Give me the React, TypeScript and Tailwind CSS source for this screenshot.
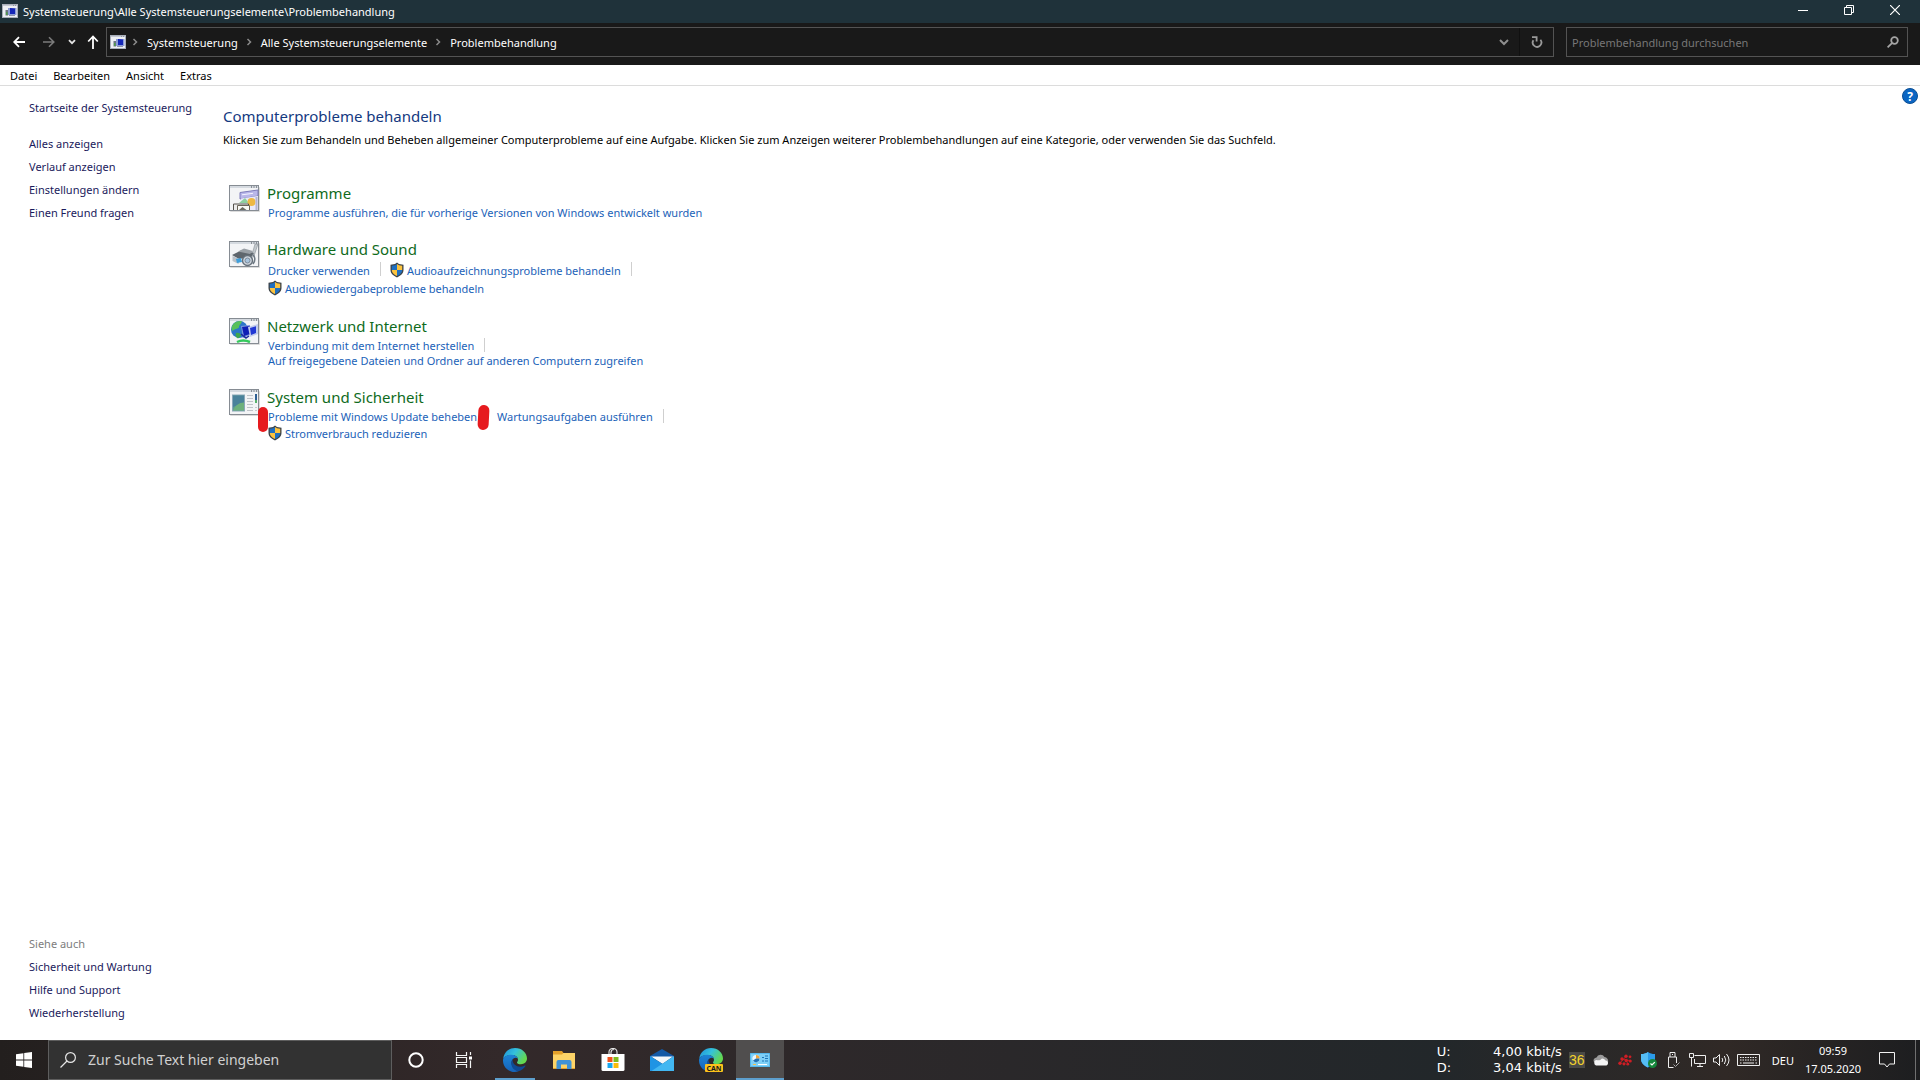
import React from "react";

function WindowIcon({ className }: { className: string }) {
  return (
    <svg viewBox="0 0 16 14" className={className} aria-hidden="true">
      <rect width="16" height="14" fill="#eef0f4" />
      <rect width="16" height="2" fill="#c3c8d2" />
      <path d="M11 1h1M13 1h1" stroke="#5b6270" />
      <rect x="0.5" y="0.5" width="15" height="13" fill="none" stroke="#a9afba" />
      <rect x="6" y="4" width="8.500" height="7" fill="#8b9cd6" />
      <path d="m8 4 5 .5V10H8z" fill="#1426b8" />
      <rect x="3.5" y="6" width="2.500" height="5.500" fill="#6d7682" />
      <rect x="4" y="8" width="1.500" height="3" fill="#4f9a4c" />
      <path d="M7 11.500h6" stroke="#8d93b0" />
    </svg>
  );
}

function Shield() {
  return (
    <svg viewBox="0 0 14 16" className="h-4 w-3.5 shrink-0" aria-hidden="true">
      <path d="M7 .5 9 2l4.500.8v5.200c0 3.500-3 5.800-6.500 7.500C3.500 13.800.5 11.500.5 8V2.800L5 2z" fill="#3d4348" />
      <path d="M7 2v6H1.800V3.800L5 3.200z" fill="#1f6fc0" />
      <path d="M7 2v6h5.200V3.800L9 3.200z" fill="#fcc33d" />
      <path d="M7 8v6C4 12.600 1.800 11 1.800 8z" fill="#fcc33d" />
      <path d="M7 8v6c3-1.400 5.200-3 5.200-6z" fill="#1f6fc0" />
    </svg>
  );
}

function Frame({ children }: { children: React.ReactNode }) {
  return (
    <svg viewBox="0 0 32 28" className="mt-0.5 h-7 w-8 shrink-0" aria-hidden="true">
      <rect x="1" y="2" width="30" height="25" rx="1" fill="#dcdcdc" />
      <rect x="0.5" y="0.5" width="29" height="25" fill="#f3f4f6" stroke="#868c93" />
      <rect x="1" y="1" width="28" height="2" fill="#d5dae0" />
      <path d="M22 2h1M24.500 2h1M27 2h1" stroke="#40464e" />
      {children}
    </svg>
  );
}

function ProgramsArt() {
  return (
    <Frame>
      <path d="M11 7.500 29 5v6l-18 3z" fill="#b9b7ea" stroke="#7f7dbb" />
      <path d="m13 9.800 11-1.500" stroke="#f4f3ff" />
      <path d="M12 13.500 29 11v14H12z" fill="#e9e9fa" />
      <path d="m10 18 6-5 4 5z" fill="#8ccf9e" />
      <circle cx="22.500" cy="17" r="4" fill="#eeb844" />
      <path d="M4.500 25v-6h15v6" fill="#ececec" stroke="#55524c" />
      <path d="M8.500 25v-4.500h12V25" fill="#f8f8f4" stroke="#6a6458" />
      <path d="m10 25 3.500-3 4 3z" fill="#6b6b62" />
      <path d="M27.500 12v13" stroke="#b4b4d4" strokeWidth="2" />
    </Frame>
  );
}

function HardwareArt() {
  return (
    <Frame>
      <path d="M26 3h3l-4 12-3 2z" fill="#c3c8cd" stroke="#888e94" strokeWidth=".6" />
      <path d="m3 14 10-5 12 3-3 4-12 2z" fill="#5f666d" />
      <path d="m9 10.500 6-3 9 2.500-3 3z" fill="#9aa0a6" />
      <path d="m3.500 15 7 3-1 5-6-3z" fill="#b9c0c7" />
      <path d="m7 18 5-1 1 4-5 1z" fill="#3f9fdc" />
      <circle cx="18.500" cy="19.500" r="5" fill="#cfd6de" stroke="#66707a" strokeWidth="1.400" />
      <circle cx="18.500" cy="19.500" r="2.500" fill="#a9c4dc" stroke="#7d8a9a" />
      <path d="M23 13c3 2 4 6 1 10" fill="none" stroke="#6e7882" strokeWidth="1.500" />
    </Frame>
  );
}

function NetworkArt() {
  return (
    <Frame>
      <circle cx="10.500" cy="11.500" r="8.500" fill="#2d76c9" />
      <path d="M4 6.500c3-3.500 7-4 9-3-1 3-3 3-3 6-2 2-4 1-6.500 3.500-1.500-2-1-4.500.5-6.500z" fill="#58c05a" />
      <path d="M7 15c3-1 5 1 5 3l-3 2.500c-2-1-3-3.500-2-5.500z" fill="#3ea64e" />
      <path d="m12 8 9-1v10l-7 3z" fill="#7f97dd" />
      <path d="m13 9 8-1v8l-6 2z" fill="#0f1fb5" />
      <path d="m19 9 10-3v10l-8 3z" fill="#c2ccec" />
      <path d="m21 10 6-1.800v6.800L22 17z" fill="#2238d4" />
      <path d="m12 16 5 4 3-2" fill="none" stroke="#1b2a9a" strokeWidth="1.500" />
      <path d="M8 24q6-3 13 0" fill="none" stroke="#35c95c" strokeWidth="2.500" />
    </Frame>
  );
}

function SystemArt() {
  return (
    <Frame>
      <rect x="3.500" y="6" width="12" height="16" fill="#5c9c95" stroke="#8ba7ba" />
      <path d="M4 6.500h11v7L4 18z" fill="#4a829b" />
      <path d="M4 21.500c2-5 6-8 11-8v8z" fill="#6db07c" />
      <path d="M18 6.500h6M18 9.500h6M18 12.500h6M18 15.500h6M18 18.500h6M18 21.500h6" stroke="#bfc3c8" />
      <path d="M27 5v9" stroke="#2e5f93" strokeWidth="2" />
      <path d="M27 11v3" stroke="#58b26c" strokeWidth="2" />
      <path d="M26 18.500h2M26 21.500h2" stroke="#c6c9cd" />
    </Frame>
  );
}

type Task = { text: string; shield?: boolean; divider?: boolean };

function TaskLink({ text, shield, divider }: Task) {
  return (
    <span className="flex items-center">
      <a href="#" className="flex items-center gap-[3px] whitespace-nowrap hover:underline">
        {shield && <Shield />}
        <span>{text}</span>
      </a>
      {divider && <span className="mr-[9px] ml-2.5 mb-0.5 h-3.5 w-px bg-[#cfcfcf]" />}
    </span>
  );
}

function Category({ title, art, rows, children }: { title: string; art: React.ReactNode; rows: Task[][]; children?: React.ReactNode }) {
  return (
    <section className="relative flex gap-1.5">
      {art}
      <div>
        <h2 className="text-[15px] leading-5 text-[#0f6b1c]">
          <a href="#">{title}</a>
        </h2>
        <div className="ml-px pt-0.5">
          {rows.map((row, i) => (
            <div key={i} className={row.some((t) => t.shield) ? "flex h-[18px] items-center" : "flex h-[15px] items-center"}>
              {row.map((t) => (
                <TaskLink key={t.text} {...t} />
              ))}
            </div>
          ))}
        </div>
      </div>
      {children}
    </section>
  );
}

const Crumb = ({ children }: { children: string }) => (
  <>
    <svg viewBox="0 0 6 8" className="h-2 w-1.5" fill="none" stroke="#8a8a8a" strokeWidth="1.500" aria-hidden="true">
      <path d="m1.500 1 3 3-3 3" />
    </svg>
    <button className="mr-2 ml-[9px] whitespace-nowrap">{children}</button>
  </>
);

function EdgeIcon({ can }: { can?: boolean }) {
  const id = can ? "edge-can" : "edge";
  return (
    <svg viewBox="0 0 24 24" className="size-6" aria-hidden="true">
      <defs>
        <linearGradient id={id + "-a"} x1="0" y1="0" x2="1" y2=".5">
          <stop offset="0" stopColor="#1d8fdb" />
          <stop offset=".5" stopColor="#34c1dc" />
          <stop offset="1" stopColor="#64d84f" />
        </linearGradient>
        <linearGradient id={id + "-b"} x1="0" y1="0" x2="0" y2="1">
          <stop offset="0" stopColor="#1c84d6" />
          <stop offset="1" stopColor="#1563b8" />
        </linearGradient>
      </defs>
      <path d="M.3 10.500C1 4.500 6 0 12 0c7 0 12 5 12 10.500 0 3.500-2.800 5.700-6 5.700-2.600 0-4-.8-4-1.800 0-.7 1-1 1-2.700C15 9 12.200 7 8.800 7 4.500 7 1.500 8.500.3 10.500z" fill={`url(#${id}-a)`} />
      <path d="M.3 10.500C1.500 8.200 4.800 6.700 8.300 6.700c3.500 0 6 1.800 6.600 3.800C13.500 9.300 11.800 9.400 10.500 10.500 7 13 8 21 15.500 23.300 8 25.800 0 20.500 0 12.500c0-.7.100-1.400.3-2z" fill={`url(#${id}-b)`} />
      <path d="M9.500 11.500C6.500 15 9 22.500 15.500 23.300c3-.8 5.500-2.800 7-5.300.3-.5-.2-.7-.6-.5C16 20.500 9.700 17.500 9.500 11.500z" fill="#0f4a94" />
      {can && (
        <>
          <rect x="6" y="16" width="18" height="8" rx="1" fill="#fcc21b" />
          <text x="15" y="22.500" textAnchor="middle" fontSize="7" fontWeight="700" fontFamily="'Noto Sans', sans-serif" fill="#1b1b1b">CAN</text>
        </>
      )}
    </svg>
  );
}

function TaskButton({ label, running, active, children }: { label: string; running?: boolean; active?: boolean; children: React.ReactNode }) {
  return (
    <button aria-label={label} className={active ? "relative flex h-10 w-12 items-center justify-center bg-[#504e4e]" : "relative flex h-10 w-12 items-center justify-center"}>
      {children}
      {running && <span className="absolute inset-x-1 bottom-0 h-0.5 bg-[#5d9fcd]" />}
      {active && <span className="absolute inset-x-0 bottom-0 h-0.5 bg-[#5d9fcd]" />}
    </button>
  );
}

const navLinks = ["Alles anzeigen", "Verlauf anzeigen", "Einstellungen ändern", "Einen Freund fragen"];
const seeAlso = ["Sicherheit und Wartung", "Hilfe und Support", "Wiederherstellung"];

export default function App() {
  return (
    <div className="flex min-h-screen flex-col bg-white font-['Noto_Sans',sans-serif] text-[11px] leading-[15px] text-black">
      <header>
        <div className="flex h-[23px] items-center bg-[#1f323a] text-white">
          <WindowIcon className="mb-0.5 ml-0.5 h-3.5 w-4" />
          <h1 className="ml-[5px] flex-1">Systemsteuerung\Alle Systemsteuerungselemente\Problembehandlung</h1>
          <button aria-label="Minimieren" className="flex h-[23px] w-[46px] items-center justify-center">
            <svg viewBox="0 0 10 10" className="mb-1 size-2.5" stroke="#fff"><path d="M0 5.500h10" /></svg>
          </button>
          <button aria-label="Verkleinern" className="flex h-[23px] w-[46px] items-center justify-center">
            <svg viewBox="0 0 10 10" className="mb-1 size-2.5" fill="none" stroke="#fff"><path d="M.5 2.500h7v7h-7zM2.500 2.500v-2h7v7h-2" /></svg>
          </button>
          <button aria-label="Schließen" className="mr-0.5 flex h-[23px] w-[46px] items-center justify-center">
            <svg viewBox="0 0 10 10" className="mb-1 size-2.5" fill="none" stroke="#fff" strokeWidth="1.200"><path d="m0 0 10 10M10 0 0 10" /></svg>
          </button>
        </div>

        <div className="flex h-[42px] items-center bg-[#191919] pr-3 pb-1 text-white">
          <button aria-label="Zurück" className="ml-[13px]">
            <svg viewBox="0 0 12 12" className="size-3" fill="none" stroke="#fff" strokeWidth="1.800"><path d="M12 6H1.500M6 1.200 1.200 6 6 10.800" /></svg>
          </button>
          <button aria-label="Vorwärts" className="ml-[18px]">
            <svg viewBox="0 0 12 12" className="size-3" fill="none" stroke="#7b7b7b" strokeWidth="1.600"><path d="M0 6h10.500M6 1.200 10.800 6 6 10.800" /></svg>
          </button>
          <button aria-label="Zuletzt besucht" className="ml-[13px]">
            <svg viewBox="0 0 8 6" className="h-1.5 w-2" fill="none" stroke="#e4e4e4" strokeWidth="1.800"><path d="m1 1.200 3 3 3-3" /></svg>
          </button>
          <button aria-label="Nach oben" className="ml-[11px]">
            <svg viewBox="0 0 12 14" className="h-3.5 w-3" fill="none" stroke="#fff" strokeWidth="1.800"><path d="M6 14V1.500M1.200 6.500 6 1.500l4.800 5" /></svg>
          </button>
          <nav className="ml-[7px] flex h-[30px] flex-1 items-center border border-[#535353] pl-[3px]">
            <WindowIcon className="mr-1.5 h-3.5 w-4" />
            <Crumb>Systemsteuerung</Crumb>
            <Crumb>Alle Systemsteuerungselemente</Crumb>
            <Crumb>Problembehandlung</Crumb>
            <button aria-label="Vorherige Orte" className="mr-2.5 ml-auto">
              <svg viewBox="0 0 10 7" className="h-[7px] w-2.5" fill="none" stroke="#8f8f8f" strokeWidth="2"><path d="m1 1 4 4 4-4" /></svg>
            </button>
            <button aria-label="Aktualisieren" className="flex h-7 w-[34px] items-center justify-center border-l border-[#101010]">
              <svg viewBox="0 0 12 12" className="size-3" fill="none" stroke="#9a9a9a" strokeWidth="1.800"><path d="M2.400 4.200A4.300 4.300 0 1 0 9.400 3.800M1 1.200H5.600V5.600" /></svg>
            </button>
          </nav>
          <form className="ml-3 flex h-[30px] w-[342px] items-center border border-[#535353] pr-2 pl-[5px]">
            <input aria-label="Problembehandlung durchsuchen" placeholder="Problembehandlung durchsuchen" className="min-w-0 flex-1 bg-transparent outline-none placeholder:text-[#777]" />
            <svg viewBox="0 0 12 12" className="size-3" fill="none" stroke="#a5a5a5" strokeWidth="1.800" aria-hidden="true"><circle cx="7.500" cy="4.500" r="3.300" /><path d="M5.200 6.800.6 11.400" /></svg>
          </form>
        </div>

        <div className="flex h-[21px] items-center gap-4 border-b border-[#dcdcdc] px-2.5 text-black">
          <button>Datei</button>
          <button>Bearbeiten</button>
          <button>Ansicht</button>
          <button>Extras</button>
        </div>
      </header>

      <div className="flex flex-1">
        <aside className="flex w-[223px] flex-col pt-2.5 pb-4 pl-[29px] leading-[23px] text-[#1a1a5c]">
          <a href="#" className="mb-[13px]">Startseite der Systemsteuerung</a>
          {navLinks.map((l) => (
            <a key={l} href="#">{l}</a>
          ))}
          <p className="mt-auto text-[#7d7d7d]">Siehe auch</p>
          {seeAlso.map((l) => (
            <a key={l} href="#">{l}</a>
          ))}
        </aside>

        <main className="min-w-0 flex-1 pt-5">
          <h2 className="text-[15px] leading-5 text-[#14397f]">Computerprobleme behandeln</h2>
          <p className="mt-1.5">
            Klicken Sie zum Behandeln und Beheben allgemeiner Computerprobleme auf eine Aufgabe. Klicken Sie zum Anzeigen weiterer Problembehandlungen auf eine Kategorie, oder verwenden Sie das Suchfeld.
          </p>
          <div className="mt-9 ml-1.5 flex flex-col gap-[19px] text-[#1b62b8]">
            <Category title="Programme" art={<ProgramsArt />} rows={[[{ text: "Programme ausführen, die für vorherige Versionen von Windows entwickelt wurden" }]]} />
            <Category
              title="Hardware und Sound"
              art={<HardwareArt />}
              rows={[
                [{ text: "Drucker verwenden", divider: true }, { text: "Audioaufzeichnungsprobleme behandeln", shield: true, divider: true }],
                [{ text: "Audiowiedergabeprobleme behandeln", shield: true }],
              ]}
            />
            <Category
              title="Netzwerk und Internet"
              art={<NetworkArt />}
              rows={[[{ text: "Verbindung mit dem Internet herstellen", divider: true }], [{ text: "Auf freigegebene Dateien und Ordner auf anderen Computern zugreifen" }]]}
            />
            <Category
              title="System und Sicherheit"
              art={<SystemArt />}
              rows={[
                [{ text: "Probleme mit Windows Update beheben", divider: true }, { text: "Wartungsaufgaben ausführen", divider: true }],
                [{ text: "Stromverbrauch reduzieren", shield: true }],
              ]}
            >
              <span className="absolute top-5 left-[29px] h-[25px] w-2.5 rounded-full bg-[#e61a1e]" />
              <span className="absolute top-[18px] left-[249px] h-[25px] w-[11px] rotate-3 rounded-full bg-[#e61a1e]" />
            </Category>
          </div>
        </main>

        <button aria-label="Hilfe" className="mt-0.5 mr-0.5 flex size-4 items-center justify-center self-start rounded-full border border-[#0b4f94] bg-[#0b66c3] text-[12px] font-bold text-white">?</button>
      </div>

      <footer className="flex h-10 items-center bg-[#1f2225] text-white">
        <div className="flex h-10 min-w-0 flex-1 items-center bg-linear-to-r from-[#231f1e] from-0% via-[#33292a] via-35% to-[#22272a]">
          <button aria-label="Start" className="flex h-10 w-12 items-center justify-center">
            <svg viewBox="0 0 16 16" className="size-4" fill="#fff"><path d="M0 2.200 7.400 1.200v6.400H0zM8.200 1.100 16 0v7.600H8.200zM0 8.400h7.400v6.400L0 13.800zM8.200 8.400H16V16l-7.800-1.100z" /></svg>
          </button>
          <label className="flex h-10 w-[344px] items-center border border-[#5e5e5e] bg-[#323232] pl-[11px]">
            <svg viewBox="0 0 16 16" className="size-4" fill="none" stroke="#e6e6e6" strokeWidth="1.200" aria-hidden="true"><circle cx="10.500" cy="5.500" r="4.900" /><path d="M7 9 .5 15.500" /></svg>
            <input aria-label="Zur Suche Text hier eingeben" placeholder="Zur Suche Text hier eingeben" className="ml-3 min-w-0 flex-1 bg-transparent text-[14px] leading-5 outline-none placeholder:text-[#d0d0d0]" />
          </label>
          <TaskButton label="Cortana">
            <svg viewBox="0 0 16 16" className="size-4" fill="none" stroke="#fff" strokeWidth="2"><circle cx="8" cy="8" r="6.700" /></svg>
          </TaskButton>
          <TaskButton label="Aktive Anwendungen">
            <svg viewBox="0 0 18 16" className="h-4 w-[18px]" fill="none" stroke="#f4f4f4" strokeWidth="1.200"><path d="M1.500 0v3.500h10V0M1.500 16v-3.500h10V16M1.500 5.500h10v5h-10zM15.500 0v3M15.500 8.500V16" /><path d="M14 4.500h3v3h-3z" fill="#fff" stroke="none" /></svg>
          </TaskButton>
          <div className="ml-[3px] flex gap-px">
            <TaskButton label="Microsoft Edge" running><EdgeIcon /></TaskButton>
            <TaskButton label="Explorer">
              <svg viewBox="0 0 22 18" className="h-[18px] w-[22px]">
                <path d="M0 0h9l1.500 2H22v16H0z" fill="#e3a02a" /><path d="M0 3.500h9l1.500-1.500H22v15H0z" fill="#fcd367" />
                <path d="M3.500 18V11q0-2 2-2h11q2 0 2 2v7h-4.500v-4.500H8V18z" fill="#3f92d6" />
              </svg>
            </TaskButton>
            <TaskButton label="Microsoft Store">
              <svg viewBox="0 0 24 24" className="size-6">
                <path d="M8 6V4a4 3.500 0 0 1 8 0v2M10 6V4.500a3 3 0 0 1 3-3" fill="none" stroke="#e8e8e8" strokeWidth="1.100" />
                <path d="M.5 6h23v15.500a1.500 1.500 0 0 1-1.500 1.500H2a1.500 1.500 0 0 1-1.500-1.500z" fill="#fff" />
                <path d="M6.500 9h5v5h-5z" fill="#f1511b" /><path d="M12.500 9h5v5h-5z" fill="#80bb1c" /><path d="M6.500 15h5v5h-5z" fill="#1aa7ee" /><path d="M12.500 15h5v5h-5z" fill="#fbbc0a" />
              </svg>
            </TaskButton>
            <TaskButton label="Mail">
              <svg viewBox="0 0 24 22" className="h-[22px] w-6">
                <path d="M0 7 12 0l12 7v3H0z" fill="#1459a6" /><path d="M1 7.500h22L12.500 15z" fill="#f4f7fa" />
                <path d="M0 7v15h24z" fill="#1f94e4" /><path d="M24 7v15H1.500z" fill="#42b7f2" />
              </svg>
            </TaskButton>
            <TaskButton label="Microsoft Edge Canary"><EdgeIcon can /></TaskButton>
            <TaskButton label="Systemsteuerung" active>
              <svg viewBox="0 0 20 14" className="h-3.5 w-5">
                <rect width="20" height="14" rx=".5" fill="#56b9ee" /><rect x="1" y="1" width="18" height="12" fill="#7fd0f7" />
                <circle cx="6" cy="5.500" r="3.600" fill="#e9f6fd" /><path d="M6 5.500V1.900A3.600 3.600 0 0 1 9.600 5.500z" fill="#f2a43a" /><path d="M6 5.500h3.600A3.600 3.600 0 0 1 3 7.500z" fill="#2273b6" />
                <path d="M12 4.500h2M12 8h2M15 3h3M15 5.500h3M15 8h3" stroke="#1e74b8" /><path d="M3 11.500h3" stroke="#f6c04a" /><path d="M8 11.500h9" stroke="#fff" />
              </svg>
            </TaskButton>
          </div>
        </div>

        <div className="flex h-10 items-center bg-linear-to-r from-[#22272a] via-[#302926] via-60% to-[#1d1e20]">
          <div className="grid w-[125px] grid-cols-[auto_1fr] font-['DejaVu_Sans',sans-serif] text-[13px] leading-4">
            <span>U:</span>
            <span className="text-right">4,00 kbit/s</span>
            <span>D:</span>
            <span className="text-right">3,04 kbit/s</span>
          </div>
          <span className="ml-[7px] flex size-4 items-center justify-center bg-[#4b4a46] text-[14px] text-[#f3d22b]"><span className="font-['Liberation_Sans',sans-serif]">36</span></span>
          <svg viewBox="0 0 16 12" className="ml-2 h-3 w-4" aria-label="OneDrive">
            <path d="M1 8a3 3 0 0 1 2.500-4.500A4.500 4.500 0 0 1 11.500 3 4 4 0 0 1 15 8z" fill="#9b9b9b" />
            <path d="M3 11.500A3 3 0 0 1 3 6c3 .5 4 .5 6-1.500 2 0 3 1 3.500 2A2.600 2.600 0 0 1 13.500 11.500z" fill="#f4f4f4" />
          </svg>
          <svg viewBox="0 0 14 12" className="ml-[9px] h-3 w-3.5" fill="#cf1d24" aria-hidden="true">
            <circle cx="4" cy="5" r="1.700" /><circle cx="8" cy="2.200" r="1.700" /><circle cx="12" cy="2.800" r="1.400" /><circle cx="12.200" cy="7" r="1.600" /><circle cx="8.200" cy="6.500" r="1.700" /><circle cx="2" cy="9.200" r="1.700" /><circle cx="6" cy="9.800" r="1.600" /><circle cx="9.800" cy="10.200" r="1.400" /><path d="m2 9 6-6.500M4 5l8 2M8 6l2 4" stroke="#cf1d24" strokeWidth=".8" />
          </svg>
          <svg viewBox="0 0 16 16" className="ml-[9px] size-4" aria-hidden="true">
            <path d="M7 0c2 1.500 4 2 7 2v5c0 4-3 6.500-7 8.500C3 13.500 0 11 0 7V2c3 0 5-.5 7-2z" fill="#2b9bea" /><path d="M7 0v15.500C3 13.500 0 11 0 7V2c3 0 5-.5 7-2z" fill="#55bdf5" />
            <circle cx="11.500" cy="11.500" r="4.500" fill="#15883c" /><path d="m9.500 11.500 1.500 1.500 2.800-2.800" fill="none" stroke="#fff" strokeWidth="1.200" />
          </svg>
          <svg viewBox="0 0 13 16" className="ml-2.5 h-4 w-[13px]" fill="none" stroke="#eee" aria-hidden="true">
            <path d="M3 5V.5h5V5M1.500 5h8v6M1.500 5v10.500h5M5 2.500h1" /><path d="m6.500 12.500 2 2 4-4" stroke="#aaa" />
          </svg>
          <svg viewBox="0 0 17 14" className="ml-[9px] h-3.5 w-[17px]" fill="none" stroke="#eee" aria-hidden="true">
            <path d="M5.500 2.500h11v8h-11V6M11 10.500v3M8 13.500h6M.5.5h4v4h-4zM2.500 4.500v9" />
          </svg>
          <svg viewBox="0 0 17 14" className="ml-[7px] h-3.5 w-[17px]" fill="none" stroke="#eee" aria-hidden="true">
            <path d="M.5 5v4H3l3.500 3.500v-11L3 5zM9 5q1.500 2 0 4M11.300 3q3 4 0 8M13.500 1q5 6 0 12" />
          </svg>
          <svg viewBox="0 0 23 14" className="ml-[7px] h-3.5 w-[23px]" fill="none" stroke="#eee" aria-hidden="true">
            <path d="M.5 1.500h22v11H.5z" /><path d="M3 4.500h17.500M3 7h17.500" strokeDasharray="1.500 1" /><path d="M3 10h1.500M6 10h11M18.500 10H20" />
          </svg>
          <button className="ml-3">DEU</button>
          <button className="ml-2.5 w-[58px] text-center leading-[18px]">
            <span className="block">09:59</span>
            <span className="block">17.05.2020</span>
          </button>
          <button aria-label="Info-Center" className="mr-5 ml-[17px]">
            <svg viewBox="0 0 16 16" className="size-4" fill="none" stroke="#f2f2f2"><path d="M.5.5h15v11.500h-5L8 15l-2.500-3h-5z" /></svg>
          </button>
          <span className="h-10 w-[5px] border-l border-[#707070]" />
        </div>
      </footer>
    </div>
  );
}
